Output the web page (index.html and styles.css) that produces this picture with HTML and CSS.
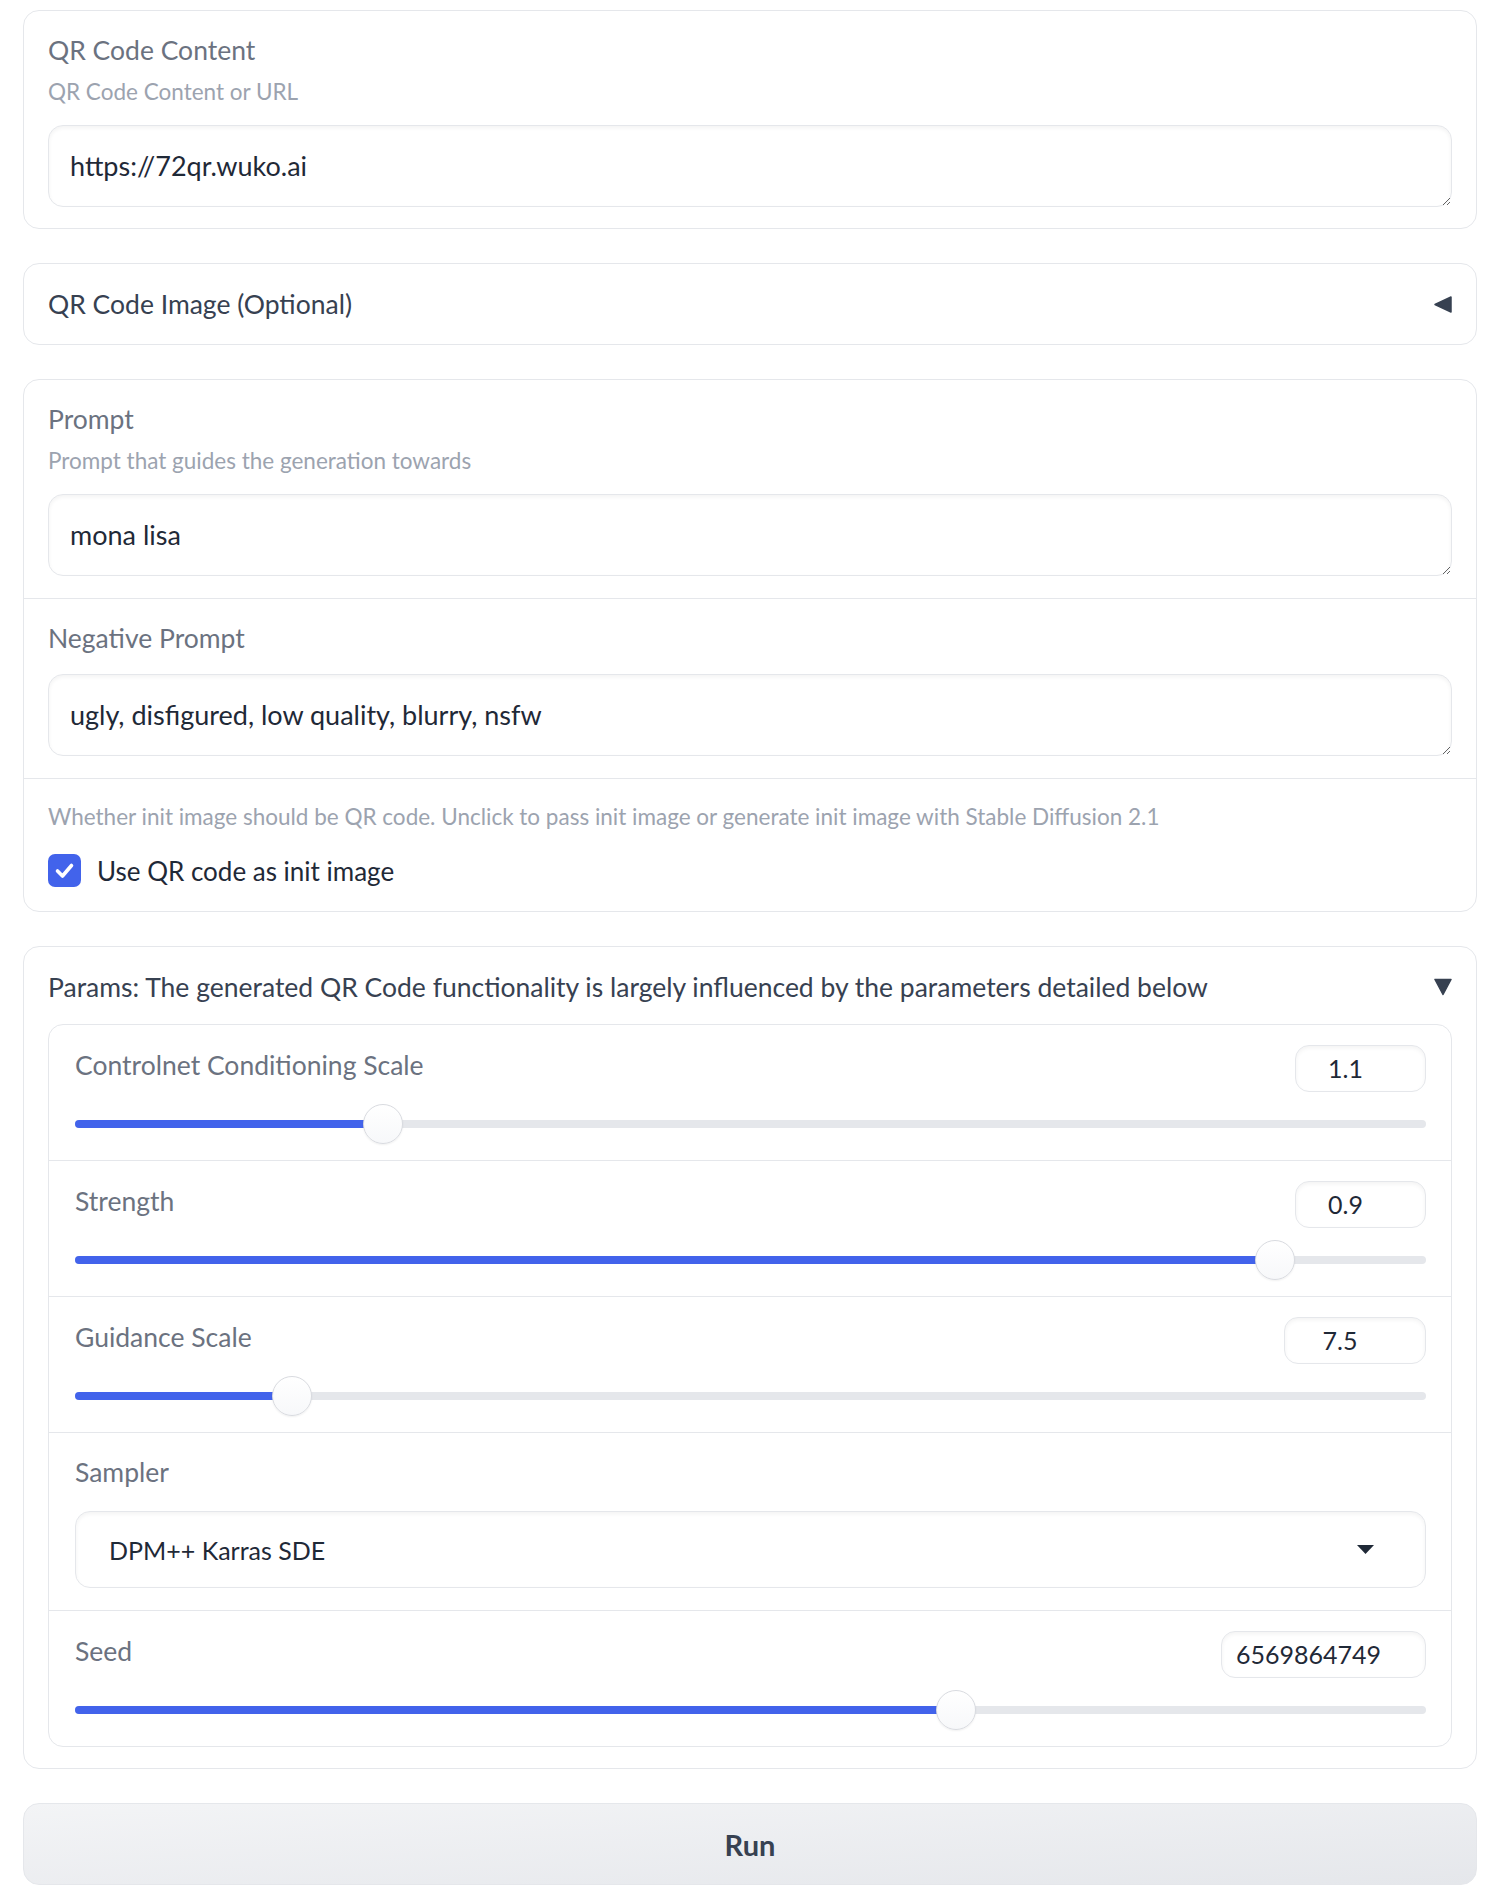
FILE: index.html
```html
<!DOCTYPE html>
<html lang="en">
<head>
  <meta charset="UTF-8">
  <meta name="viewport" content="width=device-width, initial-scale=1.0">
  <title>QR Code AI Art Generator</title>
  <link rel="stylesheet" href="styles.css">
</head>
<body>

  <div class="app">

    <!-- QR content -->
    <div class="block">
      <label class="block-label">QR Code Content</label>
      <span class="block-info">QR Code Content or URL</span>
      <textarea class="textbox">https://72qr.wuko.ai</textarea>
    </div>

    <!-- Optional image, collapsed -->
    <div class="block accordion">
      <span class="accordion-title">QR Code Image (Optional)</span>
      <svg class="arrow" width="18" height="17" viewBox="0 0 18 17">
        <polygon points="17,1 17,16 1,8.5" fill="#374151" stroke="#374151" stroke-width="1.5" stroke-linejoin="round"/>
      </svg>
    </div>

    <!-- Prompts -->
    <div class="block group">
      <div class="group-item">
        <label class="block-label">Prompt</label>
        <span class="block-info">Prompt that guides the generation towards</span>
        <textarea class="textbox">mona lisa</textarea>
      </div>
      <div class="group-item">
        <label class="block-label">Negative Prompt</label>
        <textarea class="textbox">ugly, disfigured, low quality, blurry, nsfw</textarea>
      </div>
      <div class="group-item check-item">
        <span class="block-info">Whether init image should be QR code. Unclick to pass init image or generate init image with Stable Diffusion 2.1</span>
        <div class="check-row">
          <span class="checkbox">
            <svg width="33" height="33" viewBox="0 0 33 33">
              <path d="M9.5 17 L14.5 22 L23.5 11.5" fill="none" stroke="#fff" stroke-width="3.6" stroke-linecap="round" stroke-linejoin="round"/>
            </svg>
          </span>
          <span class="check-label">Use QR code as init image</span>
        </div>
      </div>
    </div>

    <!-- Params, open -->
    <div class="block params-block">
      <div class="accordion-head">
        <span class="accordion-title">Params: The generated QR Code functionality is largely influenced by the parameters detailed below</span>
        <svg class="arrow" width="18" height="18" viewBox="0 0 18 18">
          <polygon points="1,1.5 17,1.5 9,16.5" fill="#374151" stroke="#374151" stroke-width="1.5" stroke-linejoin="round"/>
        </svg>
      </div>

      <div class="params">
        <div class="param">
          <div class="param-head">
            <label class="block-label">Controlnet Conditioning Scale</label>
            <div class="num num-sm">1.1</div>
          </div>
          <div class="slider" style="--v: 0.22">
            <div class="track"></div>
            <div class="fill"></div>
            <div class="thumb"></div>
          </div>
        </div>

        <div class="param">
          <div class="param-head">
            <label class="block-label">Strength</label>
            <div class="num num-sm">0.9</div>
          </div>
          <div class="slider" style="--v: 0.9">
            <div class="track"></div>
            <div class="fill"></div>
            <div class="thumb"></div>
          </div>
        </div>

        <div class="param">
          <div class="param-head">
            <label class="block-label">Guidance Scale</label>
            <div class="num num-md">7.5</div>
          </div>
          <div class="slider" style="--v: 0.15">
            <div class="track"></div>
            <div class="fill"></div>
            <div class="thumb"></div>
          </div>
        </div>

        <div class="param sampler">
          <label class="block-label">Sampler</label>
          <div class="dropdown">
            <span>DPM++ Karras SDE</span>
            <svg width="17" height="9" viewBox="0 0 17 9">
              <polygon points="0,0 17,0 8.5,9" fill="#1f2937"/>
            </svg>
          </div>
        </div>

        <div class="param">
          <div class="param-head">
            <label class="block-label">Seed</label>
            <div class="num num-lg">6569864749</div>
          </div>
          <div class="slider" style="--v: 0.657">
            <div class="track"></div>
            <div class="fill"></div>
            <div class="thumb"></div>
          </div>
        </div>
      </div>
    </div>

    <button class="run-btn">Run</button>

  </div>

</body>
</html>
```

FILE: styles.css
```css
body {
  margin: 0;
  background-color: #fff;
  font-family: Lato, "Liberation Sans", sans-serif;
  color: #1f2937;
}

.app {
  width: 1454px;
  margin-left: 23px;
  padding-top: 10px;
  display: flex;
  flex-direction: column;
  gap: 34px;
}

/* Bloques */
.block {
  border: 1px solid #e5e7eb;
  border-radius: 16px;
  background-color: #fff;
  padding: 20px 24px 21px;
}

.block-label {
  display: block;
  font-size: 26.5px;
  line-height: 38px;
  color: #6b7280;
}

.block-info {
  display: block;
  margin-top: 8px;
  font-size: 22.5px;
  line-height: 30px;
  color: #9ca3af;
}

.textbox {
  display: block;
  box-sizing: border-box;
  width: 100%;
  height: 82px;
  margin: 17px 0 0;
  padding: 20px 21px;
  border: 1px solid #e5e7eb;
  border-radius: 15px;
  box-shadow: inset 0 2px 4px rgba(0, 0, 0, 0.05);
  background-color: #fff;
  font-family: inherit;
  font-size: 27px;
  line-height: 40px;
  color: #1f2937;
  resize: vertical;
  overflow: hidden;
}

.block-info + .textbox {
  margin-top: 18px;
}

/* Acordeones */
.accordion {
  display: flex;
  align-items: center;
  justify-content: space-between;
  height: 80px;
  padding: 0 24px;
}

.accordion-title {
  font-size: 26.5px;
  color: #374151;
}

.accordion-head {
  display: flex;
  align-items: center;
  justify-content: space-between;
  height: 40px;
}

/* Grupo de prompts */
.group {
  padding: 0;
}

.group-item {
  padding: 20px 24px 22px;
}

.group-item + .group-item {
  border-top: 1px solid #e5e7eb;
}

.check-item {
  padding-top: 23px;
  padding-bottom: 24px;
}

.check-item .block-info {
  margin-top: 0;
}

.check-row {
  display: flex;
  align-items: center;
  gap: 16px;
  margin-top: 22px;
}

.checkbox {
  display: flex;
  width: 33px;
  height: 33px;
  border-radius: 7px;
  background-color: #4263eb;
}

.check-label {
  font-size: 26px;
  color: #1f2937;
}

/* Parametros */
.params-block {
  padding-bottom: 21px;
}

.params {
  margin-top: 17px;
  border: 1px solid #e5e7eb;
  border-radius: 15px;
}

.param {
  padding: 20px 25px 16px 26px;
}

.param + .param {
  border-top: 1px solid #e5e7eb;
}

.param-head {
  display: flex;
  justify-content: space-between;
  align-items: flex-start;
}

.param-head .block-label {
  margin-top: 1px;
}

.num {
  box-sizing: border-box;
  height: 47px;
  padding-right: 30px;
  border: 1px solid #e5e7eb;
  border-radius: 14px;
  box-shadow: inset 0 2px 4px rgba(0, 0, 0, 0.05);
  font-size: 25px;
  line-height: 45px;
  text-align: center;
  color: #1f2937;
}

.num-sm {
  width: 131px;
}

.num-md {
  width: 142px;
}

.num-lg {
  width: 205px;
}

.slider {
  position: relative;
  height: 40px;
  margin-top: 12px;
}

.track,
.fill {
  position: absolute;
  top: 16px;
  height: 8px;
  border-radius: 4px;
}

.track {
  left: 0;
  right: 0;
  background-color: #e5e7eb;
}

.fill {
  left: 0;
  width: calc((100% - 40px) * var(--v) + 20px);
  background-color: #4263eb;
}

.thumb {
  position: absolute;
  top: 0;
  left: calc((100% - 40px) * var(--v));
  box-sizing: border-box;
  width: 40px;
  height: 40px;
  border: 1px solid #d9dbe0;
  border-radius: 50%;
  background: linear-gradient(#fff, #f7f8fa);
  box-shadow: 0 1px 2px rgba(0, 0, 0, 0.06);
}

.sampler {
  padding-bottom: 22px;
}

.dropdown {
  display: flex;
  align-items: center;
  justify-content: space-between;
  box-sizing: border-box;
  height: 77px;
  margin-top: 20px;
  padding: 0 51px 0 33px;
  border: 1px solid #e5e7eb;
  border-radius: 15px;
  box-shadow: inset 0 2px 4px rgba(0, 0, 0, 0.05);
  font-size: 25px;
  color: #1f2937;
}

/* Boton principal */
.run-btn {
  display: block;
  width: 100%;
  height: 82px;
  border: 1px solid #e5e7eb;
  border-radius: 16px;
  background: linear-gradient(to bottom right, #f3f4f6, #e5e7eb);
  font-family: inherit;
  font-size: 29px;
  font-weight: 700;
  color: #374151;
  cursor: pointer;
}
```
